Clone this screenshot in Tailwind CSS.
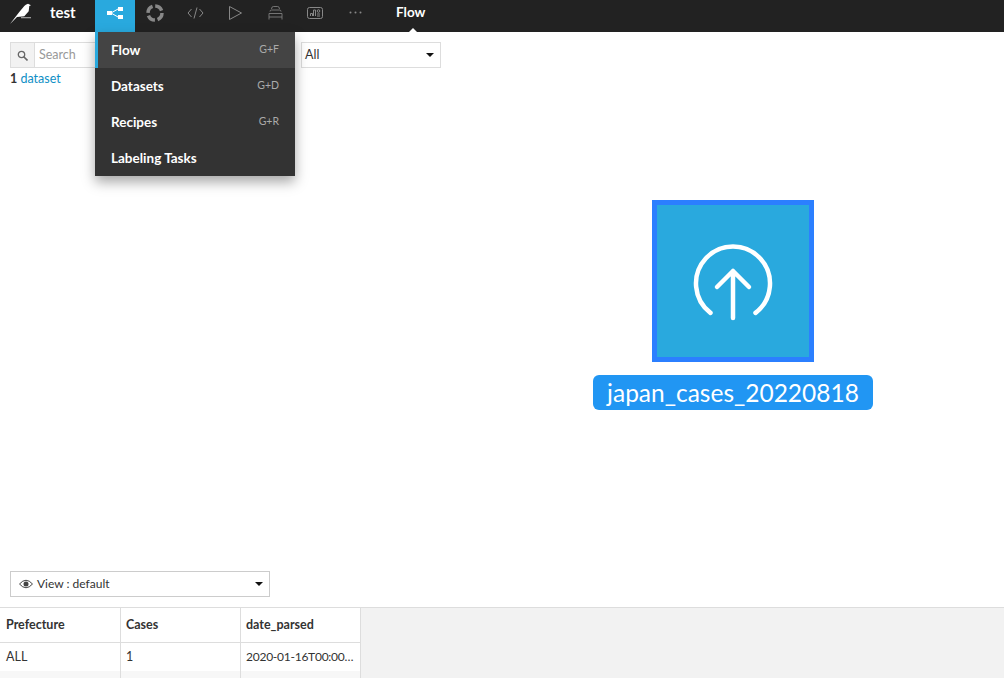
<!DOCTYPE html>
<html lang="en">
<head>
    <meta charset="UTF-8">
    <script src="https://cdn.jsdelivr.net/npm/@tailwindcss/browser@4"></script>
    <title>Flow</title>
</head>
<body class="bg-white font-['Lato','Noto_Sans',sans-serif] text-[#333] overflow-hidden">
<div class="relative flex flex-col h-[678px] w-[1004px] overflow-hidden">

    <!-- top bar -->
    <nav class="flex items-center h-8 bg-[#222] text-white shrink-0">
        <svg class="ml-[9px] w-[22px] h-8" viewBox="9 0 22 32">
            <path d="M10 24 L19.300 12 L24.300 6 Q25.500 4.600 28 3.800 L31 5.300 L29.300 6 L28.700 11.300 L24.300 16.300 L17 17 Z" fill="#fff"/>
            <rect x="21" y="17" width="10" height="1.300" fill="#999"/>
        </svg>
        <span class="ml-[19px] w-[45px] pb-2 text-[15px] font-bold leading-none">test</span>
        <div class="flex items-center justify-center w-10 h-8 pb-[7px] bg-[#29a9de]">
            <svg class="w-4 h-3" viewBox="0 0 16 12">
                <path d="M4 6 L11 2 M4 6 L11 10" stroke="#fff" stroke-width="1"/>
                <rect x="0" y="4" width="5" height="4" fill="#fff"/>
                <rect x="11" y="0" width="5" height="4" fill="#fff"/>
                <rect x="11" y="8" width="5" height="4" fill="#fff"/>
            </svg>
        </div>
        <div class="flex items-center justify-center w-10 h-8 pb-[7px]">
            <svg class="w-[18px] h-[18px]" viewBox="0 0 18 18">
                <circle cx="9" cy="9" r="7" fill="none" stroke="#888" stroke-width="3.500" stroke-dasharray="8.300 2.700"/>
            </svg>
        </div>
        <div class="flex items-center justify-center w-10 h-8 pb-[7px]">
            <svg class="w-[17px] h-3" viewBox="0 0 17 12">
                <path d="M4.500 2 L1 6 L4.500 10 M12.500 2 L16 6 L12.500 10 M10 0.500 L7 11.500" fill="none" stroke="#888" stroke-width="1"/>
            </svg>
        </div>
        <div class="flex items-center justify-center w-10 h-8 pb-[7px]">
            <svg class="w-[13px] h-[14px]" viewBox="0 0 13 14">
                <path d="M0.500 0.500 L12.500 7 L0.500 13.500 Z" fill="none" stroke="#888" stroke-width="1"/>
            </svg>
        </div>
        <div class="flex items-center justify-center w-10 h-8 pb-[7px]">
            <svg class="w-[15px] h-[14px]" viewBox="0 0 15 14">
                <path d="M3.500 3 Q3.500 0.500 5.500 0.500 L9.500 0.500 Q11.500 0.500 11.500 3 M2 5.500 Q2 4 3.500 4 L11.500 4 Q13 4 13 5.500 M1 7.500 L14 7.500 M1 7.500 L1 13.500 M14 7.500 L14 13.500 M1 11 L14 11" fill="none" stroke="#888" stroke-width="0.800"/>
            </svg>
        </div>
        <div class="flex items-center justify-center w-10 h-8 pb-[7px]">
            <svg class="w-4 h-3" viewBox="0 0 16 12">
                <rect x="0.500" y="0.500" width="15" height="11" rx="2" fill="none" stroke="#888"/>
                <path d="M3.500 9 L3.500 6.500 L5.500 6.500 L5.500 9 M6.500 9 L6.500 3 L8.500 3 L8.500 9 M10 9 L13 9 M10 7 L13 7" fill="none" stroke="#888"/>
                <circle cx="11.500" cy="4" r="1.300" fill="none" stroke="#888"/>
            </svg>
        </div>
        <div class="flex items-center justify-center w-10 h-8 pb-[7px]">
            <svg class="w-[13px] h-[3px]" viewBox="0 0 13 3">
                <circle cx="1.500" cy="1.500" r="1" fill="#888"/>
                <circle cx="6.500" cy="1.500" r="1" fill="#888"/>
                <circle cx="11.500" cy="1.500" r="1" fill="#888"/>
            </svg>
        </div>
        <div class="relative ml-[21px] h-8 pb-[6px] flex items-center text-[13.500px] font-bold leading-none">
            Flow
            <span class="absolute bottom-0 left-[13px] w-0 h-0 border-x-[4px] border-x-transparent border-b-[4px] border-b-white"></span>
        </div>
    </nav>

    <!-- filters -->
    <div class="flex items-stretch h-[26px] mt-[10px] ml-[10px] text-[12.500px] shrink-0">
        <div class="flex w-[285px] border border-[#ddd] bg-white">
            <div class="flex items-center justify-center w-6 bg-[#f2f2f2] border-r border-[#ddd]">
                <svg class="w-[11px] h-[11px]" viewBox="0 0 11 11">
                    <circle cx="4.500" cy="4.500" r="3.200" fill="none" stroke="#666" stroke-width="1.300"/>
                    <path d="M7 7 L10.500 10.500" stroke="#666" stroke-width="1.600"/>
                </svg>
            </div>
            <span class="pl-1 leading-6 text-[#999]">Search</span>
        </div>
        <div class="flex items-center justify-between w-[140px] ml-[6px] border border-[#ddd] pl-[3px] pr-[6px] bg-white">
            <span>All</span>
            <span class="w-0 h-0 border-x-[4px] border-x-transparent border-t-[4px] border-t-[#111]"></span>
        </div>
    </div>

    <div class="ml-[10px] mt-[3px] text-[12.500px] leading-[15px] shrink-0"><b>1</b> <span class="text-[#0f8fc6]">dataset</span></div>

    <div class="flex-1"></div>

    <!-- view selector -->
    <div class="flex items-center justify-between w-[260px] h-[26px] ml-[10px] mb-[10px] pl-2 pr-[6px] border border-[#ccc] text-[12px] shrink-0">
        <span class="flex items-center gap-1">
            <svg class="w-[14px] h-[10px]" viewBox="0 0 14 10">
                <path d="M0.500 5 Q7 -2.500 13.500 5 Q7 12.500 0.500 5 Z" fill="none" stroke="#444"/>
                <circle cx="7" cy="5" r="2.500" fill="#444"/>
            </svg>
            View : default
        </span>
        <span class="w-0 h-0 border-x-[4px] border-x-transparent border-t-[4px] border-t-[#111]"></span>
    </div>

    <!-- data preview -->
    <div class="h-[71px] bg-[#f2f2f2] border-t border-[#ddd] shrink-0 overflow-hidden text-[12.500px]">
        <div class="grid grid-cols-[121px_120px_120px] w-[361px] bg-white">
            <div class="h-[35px] leading-[34px] px-[6px] font-bold border-r border-b border-[#ddd]">Prefecture</div>
            <div class="h-[35px] leading-[34px] px-[5px] font-bold border-r border-b border-[#ddd]">Cases</div>
            <div class="h-[35px] leading-[34px] px-[5px] font-bold border-r border-b border-[#ddd]">date_parsed</div>
            <div class="h-7 leading-7 px-[6px] border-r border-[#ddd]">ALL</div>
            <div class="h-7 leading-7 px-[5px] border-r border-[#ddd]">1</div>
            <div class="h-7 leading-7 pl-[5px] pr-[4px] border-r border-[#ddd] text-[12px] tracking-[-0.25px] truncate">2020-01-16T00:00…</div>
            <div class="h-2 bg-[#f7f7f7] border-r border-[#ddd]"></div>
            <div class="h-2 bg-[#f7f7f7] border-r border-[#ddd]"></div>
            <div class="h-2 bg-[#f7f7f7] border-r border-[#ddd]"></div>
        </div>
    </div>

    <!-- flow node -->
    <div class="absolute top-[200px] left-[593px] w-[280px] flex flex-col items-center">
        <div class="flex items-center justify-center w-[162px] h-[162px] bg-[#29a9de] border-[5px] border-[#2b7fff]">
            <svg class="w-[80px] h-[80px]" viewBox="0 0 80 80">
                <path d="M17.500 71.900 A37 37 0 1 1 62.500 71.900" fill="none" stroke="#fff" stroke-width="4.500" stroke-linecap="round"/>
                <path d="M40 77 L40 30 M24 46 L40 30 L56 46" fill="none" stroke="#fff" stroke-width="4.500" stroke-linecap="round" stroke-linejoin="round"/>
            </svg>
        </div>
        <div class="w-full h-[35px] mt-[13px] bg-[#2196f3] rounded-[6px] text-white text-center text-[24.500px] leading-[35px]">japan_cases_20220818</div>
    </div>

    <!-- nav dropdown -->
    <div class="absolute top-8 left-[95px] w-[200px] bg-[#333] text-white text-[13.500px] font-bold shadow-[0_6px_12px_rgba(0,0,0,0.35)]">
        <div class="flex items-center justify-between h-9 pl-[13px] pr-4 bg-[#444] border-l-[3px] border-[#29a9de]">
            <span>Flow</span><span class="text-[10.500px] font-normal text-[#aaa]">G+F</span>
        </div>
        <div class="flex items-center justify-between h-9 pl-4 pr-4">
            <span>Datasets</span><span class="text-[10.500px] font-normal text-[#aaa]">G+D</span>
        </div>
        <div class="flex items-center justify-between h-9 pl-4 pr-4">
            <span>Recipes</span><span class="text-[10.500px] font-normal text-[#aaa]">G+R</span>
        </div>
        <div class="flex items-center h-9 pl-4 pr-4">Labeling Tasks</div>
    </div>
</div>
</body>
</html>
